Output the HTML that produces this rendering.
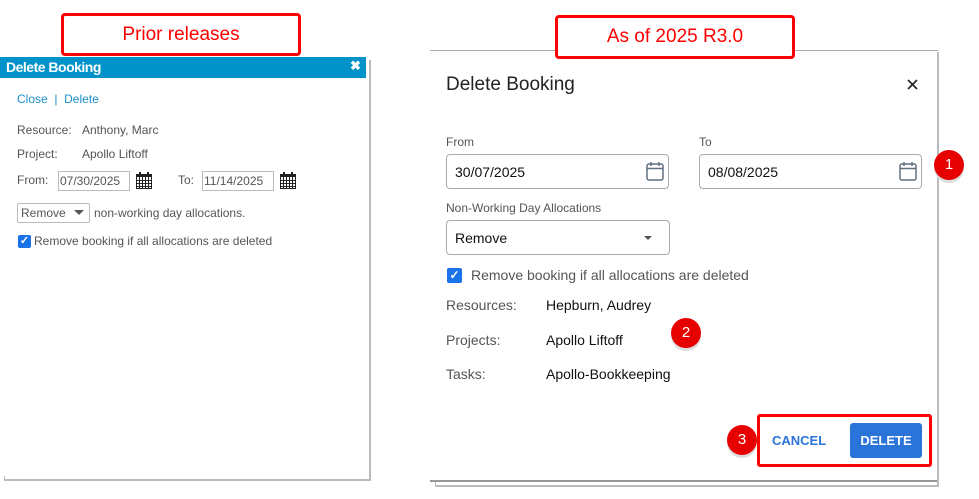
<!DOCTYPE html>
<html><head><style>
*{margin:0;padding:0;box-sizing:border-box}
body{width:979px;height:499px;background:#fff;position:relative;overflow:hidden;font-family:"Liberation Sans",sans-serif;}
.a{position:absolute;white-space:nowrap}
.lbl{border:3px solid #f00;border-radius:4px;background:#fff;color:#f00;font-size:19px;text-align:center}
.s{font-size:12px;color:#555}
.r{font-size:14px;color:#333}
.badge{position:absolute;width:30px;height:30px;border-radius:50%;background:#e60000;color:#fff;font-size:15px;text-align:center;line-height:29px;box-shadow:0 3px 0 #ddd}
</style></head><body>
<!-- left panel -->
<div class="a" style="left:0;top:57px;width:366px;height:21px;background:#0092c9"></div>
<div class="a" style="left:6px;top:59px;color:#fff;font-weight:bold;font-size:14px;letter-spacing:-0.5px">Delete Booking</div>
<div class="a" style="left:350px;top:58px;color:#fff;font-weight:bold;font-size:13px">✖</div>
<div class="a" style="left:369px;top:60px;width:2px;height:421px;background:#bbb"></div>
<div class="a" style="left:4px;top:479px;width:367px;height:2px;background:#bbb"></div>
<div class="a" style="left:4px;top:476px;width:1px;height:4px;background:#bbb"></div>
<div class="a s" style="left:17px;top:92px;color:#1a8fc9">Close&nbsp; | &nbsp;Delete</div>
<div class="a s" style="left:17px;top:123px">Resource:</div>
<div class="a s" style="left:82px;top:123px">Anthony, Marc</div>
<div class="a s" style="left:17px;top:147px">Project:</div>
<div class="a s" style="left:82px;top:147px">Apollo Liftoff</div>
<div class="a s" style="left:17px;top:173px">From:</div>
<div class="a s" style="left:58px;top:171px;width:72px;height:20px;border:1px solid #bbb;padding:2px 1px">07/30/2025</div>
<svg class="a" style="left:136px;top:172px" width="16" height="17" viewBox="0 0 16 17"><rect x="0.5" y="2.5" width="15" height="14" fill="none" stroke="#222"/><rect x="0" y="2" width="16" height="3" fill="#222"/><path d="M0 8.5h16M0 11.5h16M0 14.5h16M3.5 5v12M6.5 5v12M9.5 5v12M12.5 5v12" stroke="#222"/><rect x="3" y="0" width="2" height="3" fill="#222"/><rect x="11" y="0" width="2" height="3" fill="#222"/></svg>
<div class="a s" style="left:178px;top:173px">To:</div>
<div class="a s" style="left:202px;top:171px;width:72px;height:20px;border:1px solid #bbb;padding:2px 1px">11/14/2025</div>
<svg class="a" style="left:280px;top:172px" width="16" height="17" viewBox="0 0 16 17"><rect x="0.5" y="2.5" width="15" height="14" fill="none" stroke="#222"/><rect x="0" y="2" width="16" height="3" fill="#222"/><path d="M0 8.5h16M0 11.5h16M0 14.5h16M3.5 5v12M6.5 5v12M9.5 5v12M12.5 5v12" stroke="#222"/><rect x="3" y="0" width="2" height="3" fill="#222"/><rect x="11" y="0" width="2" height="3" fill="#222"/></svg>
<div class="a s" style="left:17px;top:203px;width:73px;height:20px;border:1px solid #bbb;border-radius:2px;padding:2px 3px">Remove</div>
<div class="a" style="left:74px;top:210px;border-left:5px solid transparent;border-right:5px solid transparent;border-top:5px solid #555"></div>
<div class="a s" style="left:94px;top:206px">non-working day allocations.</div>
<div class="a" style="left:18px;top:235px;width:13px;height:13px;background:#1a73e8;border-radius:2px;color:#fff;font-size:11px;line-height:13px;text-align:center;font-weight:bold">✓</div>
<div class="a s" style="left:34px;top:234px">Remove booking if all allocations are deleted</div>

<div class="a lbl" style="left:61px;top:13px;width:240px;height:43px;line-height:37px">Prior releases</div>

<!-- right dialog -->
<div class="a" style="left:430px;top:50px;width:508px;height:1px;background:#aaa"></div>
<div class="a" style="left:937px;top:52px;width:2px;height:434px;background:#bbb"></div>
<div class="a" style="left:430px;top:480px;width:507px;height:2px;background:#999"></div>
<div class="a" style="left:435px;top:485px;width:504px;height:2px;background:#bbb"></div>
<div class="a" style="left:435px;top:482px;width:1px;height:4px;background:#bbb"></div>
<div class="a lbl" style="left:555px;top:15px;width:240px;height:44px;line-height:38px">As of 2025 R3.0</div>
<div class="a" style="left:446px;top:74px;font-size:19px;color:#222">Delete Booking</div>
<svg class="a" style="left:907px;top:79px" width="11" height="11" viewBox="0 0 11 11"><path d="M1 1L10 10M10 1L1 10" stroke="#222" stroke-width="1.6"/></svg>
<div class="a s" style="left:446px;top:135px">From</div>
<div class="a s" style="left:699px;top:135px">To</div>
<div class="a r" style="left:446px;top:154px;width:223px;height:35px;border:1px solid #aaa;border-radius:4px;padding:9px 8px;color:#111">30/07/2025</div>
<div class="a r" style="left:699px;top:154px;width:223px;height:35px;border:1px solid #aaa;border-radius:4px;padding:9px 8px;color:#111">08/08/2025</div>
<svg class="a" style="left:646px;top:162px" width="18" height="19" viewBox="0 0 18 19"><rect x="1" y="2" width="16" height="16" rx="2" fill="none" stroke="#607080" stroke-width="1.5"/><path d="M1 6.5h16M5 0v4M13 0v4" stroke="#607080" stroke-width="1.5"/></svg>
<svg class="a" style="left:899px;top:162px" width="18" height="19" viewBox="0 0 18 19"><rect x="1" y="2" width="16" height="16" rx="2" fill="none" stroke="#607080" stroke-width="1.5"/><path d="M1 6.5h16M5 0v4M13 0v4" stroke="#607080" stroke-width="1.5"/></svg>
<div class="a s" style="left:446px;top:201px">Non-Working Day Allocations</div>
<div class="a r" style="left:446px;top:220px;width:224px;height:35px;border:1px solid #aaa;border-radius:4px;padding:9px 8px;color:#111">Remove</div>
<div class="a" style="left:644px;top:236px;border-left:4px solid transparent;border-right:4px solid transparent;border-top:4px solid #555"></div>
<div class="a" style="left:447px;top:268px;width:15px;height:15px;background:#1a73e8;border-radius:2px;color:#fff;font-size:12px;line-height:15px;text-align:center;font-weight:bold">✓</div>
<div class="a r" style="left:471px;top:267px;color:#555">Remove booking if all allocations are deleted</div>
<div class="a r" style="left:446px;top:297px;color:#555">Resources:</div>
<div class="a r" style="left:546px;top:297px;color:#111">Hepburn, Audrey</div>
<div class="a r" style="left:446px;top:332px;color:#555">Projects:</div>
<div class="a r" style="left:546px;top:332px;color:#111">Apollo Liftoff</div>
<div class="a r" style="left:446px;top:366px;color:#555">Tasks:</div>
<div class="a r" style="left:546px;top:366px;color:#111">Apollo-Bookkeeping</div>
<div class="a" style="left:757px;top:414px;width:175px;height:53px;border:3px solid #f00;border-radius:3px"></div>
<div class="a" style="left:772px;top:433px;font-size:13px;font-weight:bold;color:#2a74d9">CANCEL</div>
<div class="a" style="left:850px;top:423px;width:72px;height:35px;background:#2a74d9;border-radius:3px;color:#fff;font-size:13px;font-weight:bold;text-align:center;line-height:35px">DELETE</div>

<div class="badge" style="left:934px;top:150px">1</div>
<div class="badge" style="left:671px;top:318px">2</div>
<div class="badge" style="left:727px;top:425px">3</div>
</body></html>
